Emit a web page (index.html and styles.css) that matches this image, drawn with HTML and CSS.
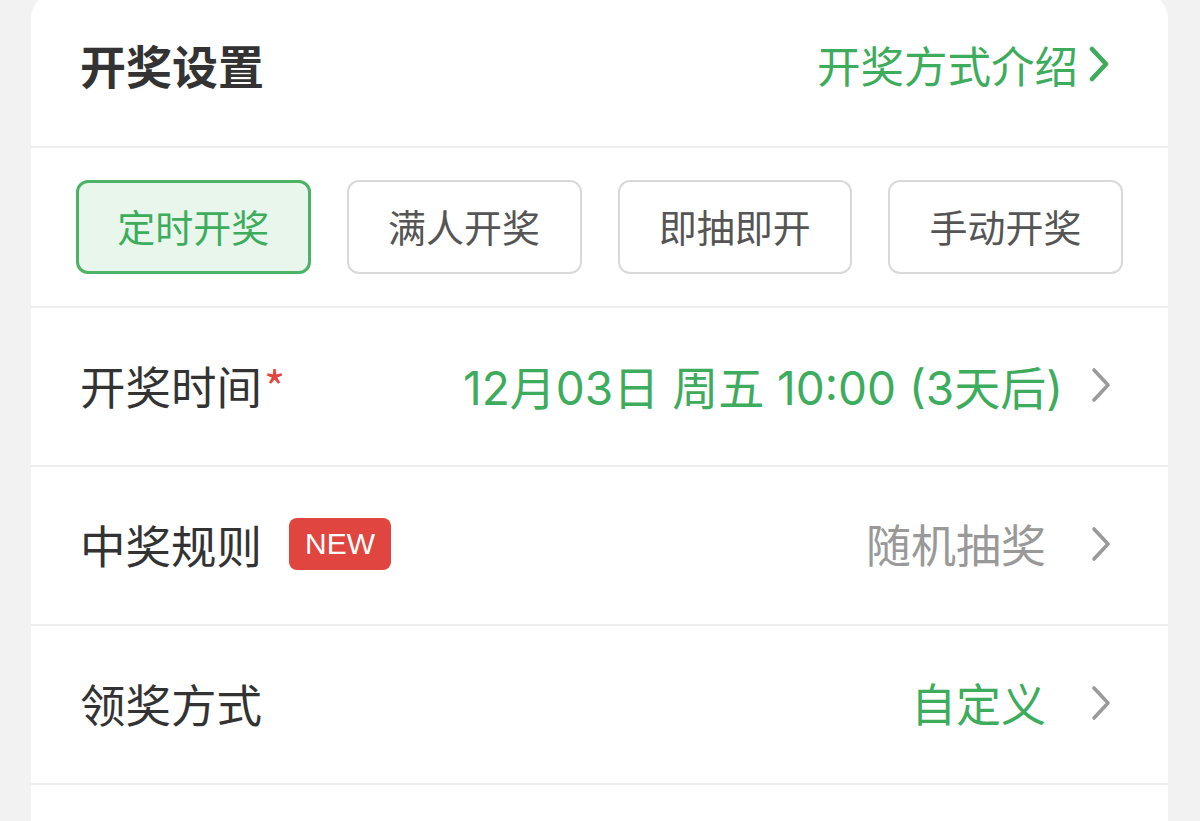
FILE: index.html
```html
<!DOCTYPE html>
<html lang="zh-CN">
<head>
    <meta charset="UTF-8">
    <meta name="viewport" content="width=device-width, initial-scale=1.0">
    <title>开奖设置</title>
    <link rel="stylesheet" href="styles.css">
</head>
<body>
    <div class="card">
        <div class="head">
            <h2 class="title">开奖设置</h2>
            <a class="intro">开奖方式介绍
                <svg class="arrow arrow-bold" viewBox="0 0 22 36"><polyline points="4,3 18,18 4,33"/></svg>
            </a>
        </div>

        <div class="modes">
            <button class="mode active">定时开奖</button>
            <button class="mode">满人开奖</button>
            <button class="mode">即抽即开</button>
            <button class="mode">手动开奖</button>
        </div>

        <div class="row">
            <div class="label">开奖时间<span class="required">*</span></div>
            <div class="value green date">12月03日 周五 10:00 (3天后)</div>
            <svg class="arrow" viewBox="0 0 22 36"><polyline points="4,3 18,18 4,33"/></svg>
        </div>

        <div class="row">
            <div class="label">中奖规则<span class="badge">NEW</span></div>
            <div class="value gray spaced">随机抽奖</div>
            <svg class="arrow" viewBox="0 0 22 36"><polyline points="4,3 18,18 4,33"/></svg>
        </div>

        <div class="row">
            <div class="label">领奖方式</div>
            <div class="value green spaced">自定义</div>
            <svg class="arrow" viewBox="0 0 22 36"><polyline points="4,3 18,18 4,33"/></svg>
        </div>

        <div class="row"></div>
    </div>
</body>
</html>
```

FILE: styles.css
```css
body {
    font-family: "Noto Sans CJK SC", "Noto Sans", sans-serif;
    background-color: #f2f2f2;
    margin: 0;
    padding: 0;
    height: 821px;
    overflow: hidden;
}
.card {
    background-color: #fff;
    margin: -6px 32px 0 31px;
    border-radius: 24px 24px 0 0;
}
.head {
    display: flex;
    justify-content: space-between;
    align-items: center;
    height: 140px;
    padding: 0 58px 12px 49px;
    border-bottom: 2px solid #eeeeee;
    box-sizing: content-box;
}
.title {
    margin: 0;
    font-size: 46px;
    font-weight: bold;
    color: #333;
}
.intro {
    display: flex;
    align-items: center;
    font-size: 43.5px;
    color: #3dac5c;
}
.intro .arrow {
    margin-left: 10px;
}
.arrow {
    width: 22px;
    height: 36px;
    flex-shrink: 0;
    fill: none;
    stroke: #9a9a9a;
    stroke-width: 3.6;
    stroke-linecap: round;
    stroke-linejoin: round;
}
.arrow-bold {
    stroke: #3dac5c;
    stroke-width: 4.6;
}
.modes {
    display: grid;
    grid-template-columns: repeat(4, 1fr);
    gap: 36px;
    padding: 32px 45px 32px 45px;
    border-bottom: 2px solid #eeeeee;
}
.mode {
    height: 94px;
    font-family: inherit;
    font-size: 38px;
    color: #555;
    background-color: #fff;
    border: 2.5px solid #d9d9d9;
    border-radius: 12px;
    padding: 0 0 3px;
}
.mode.active {
    color: #3dac5c;
    background-color: #e8f6ec;
    border: 3px solid #4cb366;
}
.row {
    display: flex;
    align-items: center;
    height: 153px;
    padding: 0 56px 4px 49px;
    border-bottom: 2px solid #eeeeee;
}
.label {
    flex: 1;
    display: flex;
    align-items: center;
    font-size: 45.5px;
    color: #333;
}
.required {
    color: #e0463f;
    align-self: flex-start;
    margin-left: 2px;
}
.badge {
    margin-left: 27px;
    height: 52px;
    padding: 0 16px;
    display: flex;
    align-items: center;
    font-family: "Liberation Sans", Arial, sans-serif;
    font-size: 30px;
    color: #fff;
    background-color: #e0463f;
    border-radius: 8px;
}
.value {
    font-size: 45px;
    margin-right: 24px;
}
.value.spaced {
    margin-right: 44px;
}
.date {
    font-family: Inter, "Noto Sans CJK SC", sans-serif;
    font-size: 46px;
    margin-right: 27px;
}
.green {
    color: #3dac5c;
}
.gray {
    color: #999;
}
```
